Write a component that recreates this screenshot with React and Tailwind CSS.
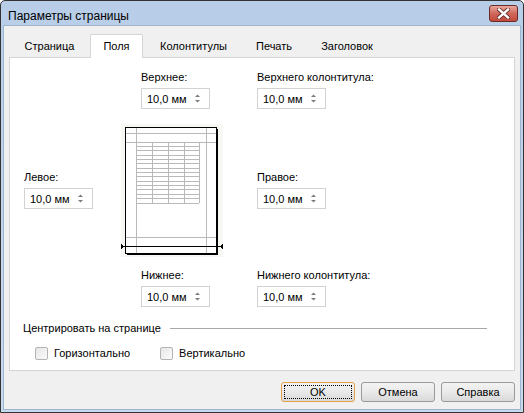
import React from 'react';

const font = { fontFamily: '"Liberation Sans", Arial, sans-serif' };

function Spin({ value = '10,0 мм' }) {
  return (
    <div className="w-[69px] h-[21px] border border-[#d2d2d2] bg-white flex items-center justify-between pl-[5px] pr-[8px]">
      <span className="text-[11px] leading-[14px] text-black">{value}</span>
      <svg width="7" height="13" viewBox="0 0 7 13">
        <path d="M3.5 2.5 L6 5 L1 5 Z" fill="#7c7c7c" />
        <path d="M1 8 L6 8 L3.5 10.5 Z" fill="#7c7c7c" />
      </svg>
    </div>
  );
}

function Field({ label }) {
  return (
    <div className="flex flex-col gap-[4px]">
      <div className="text-[11px] leading-[14px] text-black whitespace-nowrap">{label}</div>
      <Spin />
    </div>
  );
}

function Preview() {
  const rows = [];
  for (let i = 0; i <= 14; i++) {
    const y = 18 + i * 4.36;
    rows.push(<line key={'r' + i} x1="15" x2="78" y1={y} y2={y} stroke="#b9b9b9" strokeWidth="1" />);
  }
  const cols = [31, 47, 63, 78].map((x) => (
    <line key={'c' + x} x1={x} x2={x} y1="18" y2="79" stroke="#b9b9b9" strokeWidth="1" />
  ));
  return (
    <svg width="102" height="133" viewBox="0 0 102 133" className="block bg-[#f7f7f3]" shapeRendering="crispEdges">
      <rect x="6" y="5" width="91" height="126" fill="#000" />
      <rect x="4.5" y="3.5" width="91" height="126" fill="#fff" stroke="#000" strokeWidth="1" />
      <line x1="5" x2="95" y1="9.5" y2="9.5" stroke="#b9b9b9" />
      <line x1="5" x2="95" y1="18.5" y2="18.5" stroke="#b9b9b9" />
      <line x1="5" x2="95" y1="113.5" y2="113.5" stroke="#b9b9b9" />
      <line x1="15.5" x2="15.5" y1="4" y2="129" stroke="#b9b9b9" />
      <line x1="85.5" x2="85.5" y1="4" y2="129" stroke="#b9b9b9" />
      {rows}
      {cols}
      <line x1="2" x2="100" y1="122.5" y2="122.5" stroke="#000" strokeWidth="1.4" />
      <path d="M0 120 L3 122.5 L0 125 Z" fill="#000" />
      <path d="M102 120 L99 122.5 L102 125 Z" fill="#000" />
    </svg>
  );
}

function Check({ label }) {
  return (
    <div className="flex items-center gap-[6px]">
      <div className="w-[13px] h-[13px] rounded-[2px] border border-[#b4b4b4] bg-gradient-to-br from-[#e6e6e6] to-[#fcfcfc]" />
      <span className="text-[11px] leading-[14px] text-black">{label}</span>
    </div>
  );
}

function Button({ children, primary }) {
  return (
    <button
      className={`w-[74px] h-[20px] rounded-[3px] border text-[11px] leading-[14px] text-black flex items-center justify-center p-[2px] bg-gradient-to-b from-[#f3f3f3] via-[#e9e9e9] to-[#d9d9d9] ${
        primary ? 'border-[#e2a14a]' : 'border-[#9a9a9a]'
      }`}
    >
      <span className={`w-full h-full flex items-center justify-center ${primary ? 'border border-dotted border-black' : ''}`}>
        {children}
      </span>
    </button>
  );
}

export default function App() {
  const tabs = [
    { name: 'Страница', w: 'w-[81px]' },
    { name: 'Поля', w: 'w-[53px]', active: true },
    { name: 'Колонтитулы', w: 'w-[101px]' },
    { name: 'Печать', w: 'w-[60px]' },
    { name: 'Заголовок', w: 'w-[86px]' },
  ];

  return (
    <div style={font} className="w-[524px] h-[413px] border border-[#333] rounded-t-[5px] bg-gradient-to-b from-[#b8cee8] to-[#c9dbef] flex flex-col px-[2px] pb-[2px]">
      {/* title bar */}
      <div className="h-[24px] flex items-start justify-between pl-[5px] pr-[3px]">
        <span className="text-[12px] leading-[16px] mt-[7px] text-black">Параметры страницы</span>
        <div className="mt-[4px] w-[29px] h-[17px] rounded-[3px] border border-[#6b2b26] bg-gradient-to-b from-[#e8a89e] via-[#d0675a] to-[#c14a3c] flex items-center justify-center">
          <svg width="13" height="11" viewBox="0 0 13 11">
            <path d="M2 1.5 L11 9.5 M11 1.5 L2 9.5" stroke="#5a2520" strokeWidth="4" strokeLinecap="square" />
            <path d="M2 1.5 L11 9.5 M11 1.5 L2 9.5" stroke="#fff" strokeWidth="2.4" strokeLinecap="square" />
          </svg>
        </div>
      </div>

      {/* body */}
      <div className="flex-1 bg-[#f0f0f0] border border-[#9fb5cf] flex flex-col px-[5px] pt-[8px]">
        <div className="flex h-[23px] items-end relative z-10">
          {tabs.map((t) =>
            t.active ? (
              <div
                key={t.name}
                className={`${t.w} h-[24px] -mb-[1px] bg-white border border-b-0 border-[#d5d5d5] rounded-t-[2px] flex items-center justify-center text-[11px] text-black`}
              >
                {t.name}
              </div>
            ) : (
              <div key={t.name} className={`${t.w} h-[22px] flex items-center justify-center text-[11px] text-black`}>
                {t.name}
              </div>
            )
          )}
        </div>

        <div className="h-[314px] bg-white border border-[#d5d5d5] pl-[14px] pr-[27px] pt-[12px]">
          <div className="grid grid-cols-[117px_116px_1fr]">
            <div />
            <Field label="Верхнее:" />
            <Field label="Верхнего колонтитула:" />
          </div>

          <div className="grid grid-cols-[117px_116px_1fr] mt-[15px]">
            <div className="mt-[46px]">
              <Field label="Левое:" />
            </div>
            <div className="-ml-[20px]">
              <Preview />
            </div>
            <div className="mt-[46px]">
              <Field label="Правое:" />
            </div>
          </div>

          <div className="grid grid-cols-[117px_116px_1fr] mt-[11px]">
            <div />
            <Field label="Нижнее:" />
            <Field label="Нижнего колонтитула:" />
          </div>

          <div className="flex items-center gap-[9px] mt-[14px] -ml-[1px]">
            <span className="text-[11px] leading-[14px] text-black whitespace-nowrap">Центрировать на странице</span>
            <div className="flex-1 h-px bg-[#a8a8a8]" />
          </div>

          <div className="flex items-center gap-[30px] mt-[11px] ml-[11px]">
            <Check label="Горизонтально" />
            <Check label="Вертикально" />
          </div>
        </div>

        <div className="flex justify-end gap-[6px] pt-[11px]">
          <Button primary>OK</Button>
          <Button>Отмена</Button>
          <Button>Справка</Button>
        </div>
      </div>
    </div>
  );
}
